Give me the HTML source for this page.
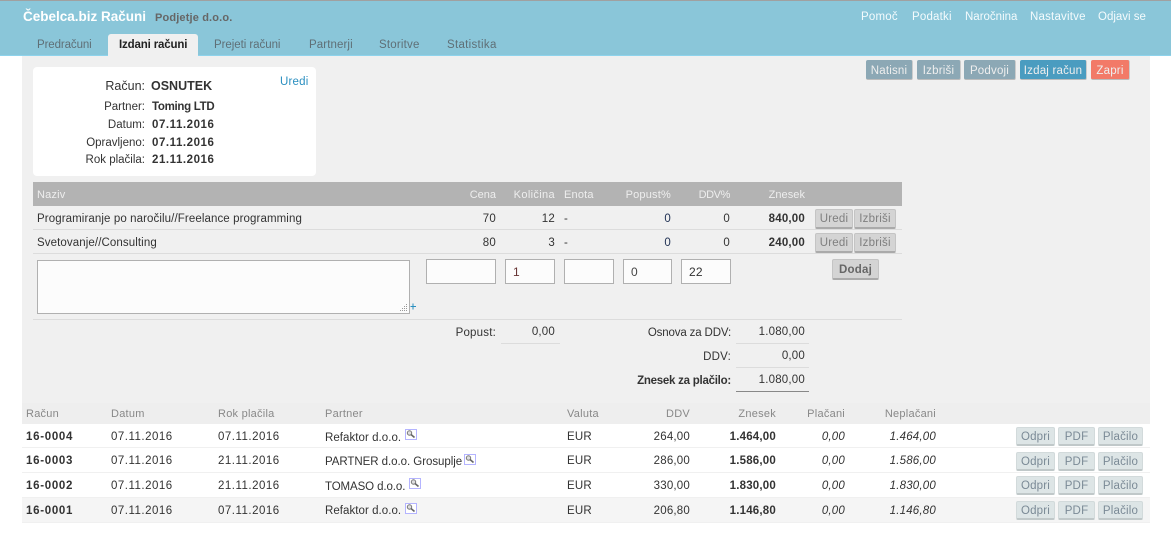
<!DOCTYPE html>
<html><head><meta charset="utf-8"><style>
html,body{margin:0;padding:0;width:1171px;height:553px;overflow:hidden;background:#fff;font-family:"Liberation Sans",sans-serif;font-size:11.5px;color:#333;letter-spacing:.2px}
div,span.a,svg.i{position:absolute}
.t{position:absolute;white-space:nowrap;line-height:16px;height:16px;margin-top:1px}
.b{font-weight:bold}
.d{letter-spacing:.5px}
.bd{letter-spacing:.55px}
.id{letter-spacing:.7px}
.h{color:#eee;font-size:11px}
.g{color:#888;font-size:11px;letter-spacing:.25px}
.btn{position:absolute;box-sizing:border-box;text-align:center;border-radius:2px;white-space:nowrap}
.top{height:20px;line-height:22px;top:60px;color:#eee;background:#8ca8b5;border-bottom:1px solid #bbb;border-right:1px solid #ccc}
.gr{height:20px;line-height:19px;color:#7f7f7f;background:#d4d4d4;border:1px solid #c4c4c4;border-bottom:2px solid #aaa}
.lo{height:19px;line-height:18px;color:#7b8a96;background:#dde5e6;border:1px solid #d2dadb;border-bottom:2px solid #c0c8c9}
.inp{position:absolute;box-sizing:border-box;background:#fcfcfc;border:1px solid #b0b0b0;top:259px;height:25px;line-height:24px;padding-left:7px;font-size:12px}
.line{position:absolute;height:1px}
.ic{position:absolute;box-sizing:border-box;width:12px;height:11px;border:1px solid #b4b4ff;background:#fff}
</style></head><body>
<div style="left:0;top:0;width:1171px;height:56px;background:#8ac6d9"></div>
<div style="left:0;top:0;width:1171px;height:1px;background:#a0a0a0"></div>
<div style="left:0;top:55px;width:1171px;height:1px;background:#8ed3ec"></div>
<div style="left:22px;top:56px;width:1128px;height:347px;background:#f0f0f0"></div>
<div style="left:22px;top:403px;width:1128px;height:21px;background:#eee"></div>

<span class="t b" style="left:23px;top:8px;color:#fff;font-size:13.5px;letter-spacing:0">Čebelca.biz Računi</span>
<span class="t b" style="left:155px;top:9px;color:#666;font-size:11px;letter-spacing:.15px">Podjetje d.o.o.</span>
<span class="t" style="left:861px;top:8px;color:#f4fbfd">Pomoč</span>
<span class="t" style="left:912px;top:8px;color:#f4fbfd">Podatki</span>
<span class="t" style="left:965px;top:8px;color:#f4fbfd;letter-spacing:0">Naročnina</span>
<span class="t" style="left:1030px;top:8px;color:#f4fbfd">Nastavitve</span>
<span class="t" style="left:1098px;top:8px;color:#f4fbfd;letter-spacing:0">Odjavi se</span>

<span class="t" style="left:37px;top:36px;color:#5f6f76;letter-spacing:-.1px">Predračuni</span>
<div style="left:108px;top:34px;width:90px;height:22px;background:#f0f0f0;border-radius:3px 3px 0 0"></div>
<span class="t b" style="left:119px;top:36px;color:#222;letter-spacing:-.15px">Izdani računi</span>
<span class="t" style="left:214px;top:36px;color:#5f6f76;letter-spacing:-.05px">Prejeti računi</span>
<span class="t" style="left:309px;top:36px;color:#5f6f76;letter-spacing:.1px">Partnerji</span>
<span class="t" style="left:379px;top:36px;color:#5f6f76">Storitve</span>
<span class="t" style="left:447px;top:36px;color:#5f6f76;letter-spacing:.3px">Statistika</span>

<div style="left:33px;top:67px;width:283px;height:109px;background:#fff;border-radius:4px"></div>
<span class="t" style="right:1026px;top:77px;font-size:12.5px;letter-spacing:0">Račun:</span>
<span class="t b" style="left:151px;top:77px;font-size:12.5px;letter-spacing:0">OSNUTEK</span>
<span class="t" style="left:280px;top:73px;color:#2a8fc0">Uredi</span>
<span class="t" style="right:1026px;top:98px;letter-spacing:0">Partner:</span><span class="t b" style="left:152px;top:98px;letter-spacing:-.3px">Toming LTD</span>
<span class="t" style="right:1026px;top:116px;letter-spacing:0">Datum:</span><span class="t b bd" style="left:152px;top:116px">07.11.2016</span>
<span class="t" style="right:1026px;top:134px;letter-spacing:0">Opravljeno:</span><span class="t b bd" style="left:152px;top:134px">07.11.2016</span>
<span class="t" style="right:1026px;top:151px;letter-spacing:0">Rok plačila:</span><span class="t b bd" style="left:152px;top:151px">21.11.2016</span>

<div class="btn top" style="left:866px;width:47px">Natisni</div>
<div class="btn top" style="left:917px;width:44px">Izbriši</div>
<div class="btn top" style="left:964px;width:52px">Podvoji</div>
<div class="btn top" style="left:1020px;width:67px;background:#4a9cc0">Izdaj račun</div>
<div class="btn top" style="left:1091px;width:39px;background:#f27a68">Zapri</div>

<div style="left:33px;top:182px;width:869px;height:24px;background:#b3b3b3"></div>
<span class="t h" style="left:37px;top:186px">Naziv</span>
<span class="t h" style="right:675px;top:186px;letter-spacing:0">Cena</span>
<span class="t h" style="right:616px;top:186px;letter-spacing:.35px">Količina</span>
<span class="t h" style="left:564px;top:186px">Enota</span>
<span class="t h" style="right:500px;top:186px">Popust%</span>
<span class="t h" style="right:441px;top:186px;letter-spacing:-.4px">DDV%</span>
<span class="t h" style="right:366px;top:186px;letter-spacing:.05px">Znesek</span>

<span class="t" style="left:37px;top:210px;letter-spacing:.1px">Programiranje po naročilu//Freelance programming</span>
<span class="t" style="right:675px;top:210px">70</span>
<span class="t" style="right:616px;top:210px">12</span>
<span class="t" style="left:564px;top:210px">-</span>
<span class="t" style="right:500px;top:210px;color:#235">0</span>
<span class="t" style="right:441px;top:210px">0</span>
<span class="t b" style="right:366px;top:210px">840,00</span>
<div class="btn gr" style="left:815px;top:209px;width:38px">Uredi</div>
<div class="btn gr" style="left:854px;top:209px;width:42px">Izbriši</div>
<div class="line" style="left:33px;top:229px;width:869px;background:#dcdcdc"></div>

<span class="t" style="left:37px;top:234px;letter-spacing:.1px">Svetovanje//Consulting</span>
<span class="t" style="right:675px;top:234px">80</span>
<span class="t" style="right:616px;top:234px">3</span>
<span class="t" style="left:564px;top:234px">-</span>
<span class="t" style="right:500px;top:234px;color:#235">0</span>
<span class="t" style="right:441px;top:234px">0</span>
<span class="t b" style="right:366px;top:234px">240,00</span>
<div class="btn gr" style="left:815px;top:233px;width:38px">Uredi</div>
<div class="btn gr" style="left:854px;top:233px;width:42px">Izbriši</div>
<div class="line" style="left:33px;top:253px;width:869px;background:#dcdcdc"></div>

<div class="inp" style="left:37px;top:260px;width:373px;height:54px"></div>
<svg class="i" style="left:398px;top:302px" width="12" height="12"><g fill="#999"><rect x="8" y="2" width="1" height="1"/><rect x="6" y="4" width="1" height="1"/><rect x="8" y="4" width="1" height="1"/><rect x="4" y="6" width="1" height="1"/><rect x="6" y="6" width="1" height="1"/><rect x="8" y="6" width="1" height="1"/><rect x="2" y="8" width="1" height="1"/><rect x="4" y="8" width="1" height="1"/><rect x="6" y="8" width="1" height="1"/><rect x="8" y="8" width="1" height="1"/></g></svg>
<svg class="i" style="left:410px;top:303px" width="7" height="7"><path d="M3 0.5V6.5M0.5 3.5H6" stroke="#2a8fc0" fill="none"/></svg>
<div class="inp" style="left:426px;width:70px"></div>
<div class="inp" style="left:505px;width:50px;color:#633">1</div>
<div class="inp" style="left:564px;width:50px"></div>
<div class="inp" style="left:623px;width:49px;color:#444">0</div>
<div class="inp" style="left:681px;width:50px">22</div>
<div class="btn gr b" style="left:832px;top:259px;width:47px;height:21px;line-height:20px;color:#666">Dodaj</div>
<div class="line" style="left:33px;top:319px;width:869px;background:#dcdcdc"></div>

<span class="t" style="right:675px;top:324px">Popust:</span>
<span class="t" style="right:616px;top:323px">0,00</span>
<div class="line" style="left:501px;top:343px;width:59px;background:#dcdcdc"></div>
<span class="t" style="right:440px;top:324px;letter-spacing:-.15px">Osnova za DDV:</span>
<span class="t" style="right:366px;top:323px">1.080,00</span>
<div class="line" style="left:736px;top:343px;width:73px;background:#dcdcdc"></div>
<span class="t" style="right:440px;top:348px">DDV:</span>
<span class="t" style="right:366px;top:347px">0,00</span>
<div class="line" style="left:736px;top:367px;width:73px;background:#dcdcdc"></div>
<span class="t b" style="right:440px;top:372px;letter-spacing:-.25px">Znesek za plačilo:</span>
<span class="t" style="right:366px;top:371px">1.080,00</span>
<div class="line" style="left:736px;top:391px;width:73px;background:#888"></div>

<span class="t g" style="left:26px;top:405px">Račun</span>
<span class="t g" style="left:111px;top:405px">Datum</span>
<span class="t g" style="left:218px;top:405px">Rok plačila</span>
<span class="t g" style="left:325px;top:405px">Partner</span>
<span class="t g" style="left:567px;top:405px">Valuta</span>
<span class="t g" style="right:481px;top:405px">DDV</span>
<span class="t g" style="right:395px;top:405px">Znesek</span>
<span class="t g" style="right:326px;top:405px">Plačani</span>
<span class="t g" style="right:235px;top:405px">Neplačani</span>

<div class="line" style="left:22px;top:447px;width:1128px;background:#f0f0f0"></div>
<div class="line" style="left:22px;top:472px;width:1128px;background:#f0f0f0"></div>
<div class="line" style="left:22px;top:497px;width:1128px;background:#f0f0f0"></div>
<div style="left:22px;top:498px;width:1128px;height:25px;background:#f5f5f5;border-bottom:1px solid #f0f0f0;box-sizing:border-box"></div>

<span class="t b id" style="left:26px;top:428px">16-0004</span>
<span class="t d" style="left:111px;top:428px">07.11.2016</span>
<span class="t d" style="left:218px;top:428px">07.11.2016</span>
<span class="t" style="left:325px;top:429px;letter-spacing:.05px">Refaktor d.o.o.</span>
<div class="ic" style="left:405px;top:429px"></div>
<span class="t" style="left:567px;top:428px">EUR</span>
<span class="t" style="right:481px;top:428px">264,00</span>
<span class="t b" style="right:395px;top:428px">1.464,00</span>
<span class="t" style="right:326px;top:428px;font-style:italic">0,00</span>
<span class="t" style="right:235px;top:428px;font-style:italic">1.464,00</span>
<div class="btn lo" style="left:1016px;top:427px;width:39px">Odpri</div>
<div class="btn lo" style="left:1058px;top:427px;width:37px">PDF</div>
<div class="btn lo" style="left:1098px;top:427px;width:45px">Plačilo</div>

<span class="t b id" style="left:26px;top:452px">16-0003</span>
<span class="t d" style="left:111px;top:452px">07.11.2016</span>
<span class="t d" style="left:218px;top:452px">21.11.2016</span>
<span class="t" style="left:325px;top:453px;letter-spacing:-.05px">PARTNER d.o.o. Grosuplje</span>
<div class="ic" style="left:464px;top:454px"></div>
<span class="t" style="left:567px;top:452px">EUR</span>
<span class="t" style="right:481px;top:452px">286,00</span>
<span class="t b" style="right:395px;top:452px">1.586,00</span>
<span class="t" style="right:326px;top:452px;font-style:italic">0,00</span>
<span class="t" style="right:235px;top:452px;font-style:italic">1.586,00</span>
<div class="btn lo" style="left:1016px;top:452px;width:39px">Odpri</div>
<div class="btn lo" style="left:1058px;top:452px;width:37px">PDF</div>
<div class="btn lo" style="left:1098px;top:452px;width:45px">Plačilo</div>

<span class="t b id" style="left:26px;top:477px">16-0002</span>
<span class="t d" style="left:111px;top:477px">07.11.2016</span>
<span class="t d" style="left:218px;top:477px">21.11.2016</span>
<span class="t" style="left:325px;top:478px;letter-spacing:-.1px">TOMASO d.o.o.</span>
<div class="ic" style="left:409px;top:478px"></div>
<span class="t" style="left:567px;top:477px">EUR</span>
<span class="t" style="right:481px;top:477px">330,00</span>
<span class="t b" style="right:395px;top:477px">1.830,00</span>
<span class="t" style="right:326px;top:477px;font-style:italic">0,00</span>
<span class="t" style="right:235px;top:477px;font-style:italic">1.830,00</span>
<div class="btn lo" style="left:1016px;top:476px;width:39px">Odpri</div>
<div class="btn lo" style="left:1058px;top:476px;width:37px">PDF</div>
<div class="btn lo" style="left:1098px;top:476px;width:45px">Plačilo</div>

<span class="t b id" style="left:26px;top:502px">16-0001</span>
<span class="t d" style="left:111px;top:502px">07.11.2016</span>
<span class="t d" style="left:218px;top:502px">07.11.2016</span>
<span class="t" style="left:325px;top:502px;letter-spacing:.05px">Refaktor d.o.o.</span>
<div class="ic" style="left:405px;top:503px"></div>
<span class="t" style="left:567px;top:502px">EUR</span>
<span class="t" style="right:481px;top:502px">206,80</span>
<span class="t b" style="right:395px;top:502px">1.146,80</span>
<span class="t" style="right:326px;top:502px;font-style:italic">0,00</span>
<span class="t" style="right:235px;top:502px;font-style:italic">1.146,80</span>
<div class="btn lo" style="left:1016px;top:501px;width:39px">Odpri</div>
<div class="btn lo" style="left:1058px;top:501px;width:37px">PDF</div>
<div class="btn lo" style="left:1098px;top:501px;width:45px">Plačilo</div>

<svg class="i" style="left:406px;top:430px" width="10" height="9"><circle cx="3.5" cy="3" r="2.2" fill="#ddd" stroke="#777"/><path d="M5 4.5L8.5 7.5" stroke="#666" stroke-width="1.6"/></svg>
<svg class="i" style="left:465px;top:455px" width="10" height="9"><circle cx="3.5" cy="3" r="2.2" fill="#ddd" stroke="#777"/><path d="M5 4.5L8.5 7.5" stroke="#666" stroke-width="1.6"/></svg>
<svg class="i" style="left:410px;top:479px" width="10" height="9"><circle cx="3.5" cy="3" r="2.2" fill="#ddd" stroke="#777"/><path d="M5 4.5L8.5 7.5" stroke="#666" stroke-width="1.6"/></svg>
<svg class="i" style="left:406px;top:504px" width="10" height="9"><circle cx="3.5" cy="3" r="2.2" fill="#ddd" stroke="#777"/><path d="M5 4.5L8.5 7.5" stroke="#666" stroke-width="1.6"/></svg>
</body></html>
